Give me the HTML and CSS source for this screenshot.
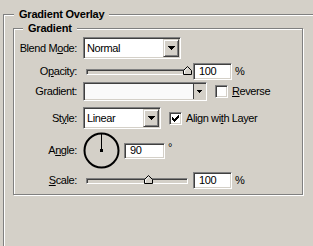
FILE: index.html
```html
<!DOCTYPE html>
<html>
<head>
<meta charset="utf-8">
<link rel="stylesheet" href="styles.css">
</head>
<body>
<div class="group outer">
  <div class="group-title outer-title">Gradient Overlay</div>
  <div class="group inner">
    <div class="group-title inner-title">Gradient</div>

    <div class="row row-blend">
      <span class="lbl">Blend M<u>o</u>de:</span>
      <div class="sunken combo combo-blend">
        <span class="combo-text">Normal</span>
        <span class="raised combo-btn"><svg class="arrow" width="7" height="4" viewBox="0 0 7 4"><path d="M0 0h7v1h-1v1h-1v1h-1v1h-1v-1h-1v-1h-1v-1h-1z"/></svg></span>
      </div>
    </div>

    <div class="row row-opacity">
      <span class="lbl">O<u>p</u>acity:</span>
      <div class="slider">
        <div class="sunken track"></div>
        <svg class="thumb" style="left:97px" width="9" height="9" viewBox="0 0 9 9"><path d="M0.5 8.5V4.5L4.5 0.5L8.5 4.5V8.5Z" fill="#d4d0c8" stroke="#000"/><path d="M1.5 7.5V4.9L4.5 1.9" fill="none" stroke="#fff"/></svg>
      </div>
      <div class="sunken field field-num">100</div>
      <span class="unit">%</span>
    </div>

    <div class="row row-gradient">
      <span class="lbl">Gradient:</span>
      <div class="sunken gradbox">
        <span class="swatch"></span>
        <span class="grad-btn"><svg width="5" height="3" viewBox="0 0 5 3"><path d="M0 0h5v1h-1v1h-1v1h-1v-1h-1v-1h-1z"/></svg></span>
      </div>
      <span class="sunken check"></span>
      <span class="check-label"><u>R</u>everse</span>
    </div>

    <div class="row row-style">
      <span class="lbl">St<u>y</u>le:</span>
      <div class="sunken combo combo-style">
        <span class="combo-text">Linear</span>
        <span class="raised combo-btn"><svg class="arrow" width="7" height="4" viewBox="0 0 7 4"><path d="M0 0h7v1h-1v1h-1v1h-1v1h-1v-1h-1v-1h-1v-1h-1z"/></svg></span>
      </div>
      <span class="sunken check check-on"><svg width="7" height="7" viewBox="0 0 7 7"><path d="M0 2h1v3h-1zM1 3h1v3h-1zM2 4h1v3h-1zM3 3h1v3h-1zM4 2h1v3h-1zM5 1h1v3h-1zM6 0h1v3h-1z"/></svg></span>
      <span class="check-label">Align wi<u>t</u>h Layer</span>
    </div>

    <div class="row row-angle">
      <span class="lbl">A<u>n</u>gle:</span>
      <svg class="dial" width="37" height="37" viewBox="0 0 37 37">
        <circle cx="18.5" cy="18.5" r="17" fill="none" stroke="#000" stroke-width="2"/>
        <path d="M18 1h1v17h-1z"/>
        <rect x="17" y="17" width="3" height="3"/>
      </svg>
      <div class="sunken field field-angle">90</div>
      <span class="degree">°</span>
    </div>

    <div class="row row-scale">
      <span class="lbl"><u>S</u>cale:</span>
      <div class="slider">
        <div class="sunken track"></div>
        <svg class="thumb" style="left:58px" width="9" height="9" viewBox="0 0 9 9"><path d="M0.5 8.5V4.5L4.5 0.5L8.5 4.5V8.5Z" fill="#d4d0c8" stroke="#000"/><path d="M1.5 7.5V4.9L4.5 1.9" fill="none" stroke="#fff"/></svg>
      </div>
      <div class="sunken field field-num">100</div>
      <span class="unit">%</span>
    </div>
  </div>
</div>
</body>
</html>
```

FILE: styles.css
```css
html, body {
  margin: 0;
  padding: 0;
  background: #d4d0c8;
  overflow: hidden;
}
body {
  width: 313px;
  height: 246px;
  padding: 14px 0 0 3px;
  box-sizing: border-box;
  font-family: "Liberation Sans", Arial, sans-serif;
  font-size: 11px;
  line-height: 13px;
  letter-spacing: -0.4px;
  color: #000;
}
.group {
  border: 1px solid #808080;
  box-shadow: inset 1px 1px #fff, 1px 1px #fff;
}
.outer {
  width: 310px;
  height: 232px;
  box-sizing: border-box;
  border-right: none;
  border-bottom: none;
  box-shadow: inset 1px 1px #fff;
}
.group-title {
  width: fit-content;
  background: #d4d0c8;
  padding: 0 5px;
  margin-top: -7px;
  font-weight: bold;
  letter-spacing: -0.2px;
  height: 13px;
}
.outer-title { margin-left: 10px; }
.inner-title { margin-left: 9px; }
.inner {
  width: 290px;
  box-sizing: border-box;
  margin: 7px 0 0 9px;
  padding: 0 0 5px 0;
}
.row {
  display: flex;
  align-items: center;
}
.lbl {
  width: 63px;
  text-align: right;
  margin-right: 6px;
  white-space: nowrap;
}
.row-blend { margin-top: 2px; height: 22px; }
.row-opacity { margin-top: 4px; height: 17px; }
.row-gradient { margin-top: 2px; height: 19px; }
.row-style { margin-top: 6px; height: 22px; }
.row-angle { margin-top: 3px; height: 37px; }
.row-scale { margin-top: 3px; height: 17px; }

.sunken {
  box-sizing: border-box;
  border: 1px solid;
  border-color: #808080 #fff #fff #808080;
  box-shadow: inset 1px 1px #404040, inset -1px -1px #d4d0c8;
  background: #fff;
}
.raised {
  box-sizing: border-box;
  border: 1px solid;
  border-color: #d4d0c8 #404040 #404040 #d4d0c8;
  box-shadow: inset 1px 1px #fff, inset -1px -1px #808080;
  background: #d4d0c8;
}
.combo {
  display: flex;
  align-items: stretch;
  height: 22px;
  padding: 1px;
}
.combo-blend { width: 98px; }
.combo-style { width: 78px; }
.combo-text {
  flex: 1;
  padding-left: 2px;
  display: flex;
  align-items: center;
}
.combo-btn {
  width: 16px;
  display: flex;
  align-items: center;
  justify-content: center;
}
.slider {
  position: relative;
  width: 102px;
  height: 17px;
  margin-left: 3px;
}
.track {
  width: 102px;
  height: 6px;
  margin-top: 6px;
  background: #d4d0c8;
}
.thumb {
  position: absolute;
  top: 3px;
  display: block;
}
.field {
  display: flex;
  align-items: center;
  padding-left: 5px;
}
.field-num {
  width: 39px;
  height: 17px;
  margin-left: 5px;
}
.unit { margin-left: 3px; }
.gradbox {
  width: 124px;
  height: 19px;
  display: flex;
  padding: 1px;
}
.swatch {
  flex: 1;
  background: #fafafa;
}
.grad-btn {
  width: 11px;
  border-left: 1px solid #404040;
  background: #d4d0c8;
  display: flex;
  align-items: center;
  justify-content: center;
}
.check {
  width: 13px;
  height: 13px;
  margin-left: 8px;
  display: flex;
  align-items: center;
  justify-content: center;
}
.check-label { margin-left: 4px; white-space: nowrap; }
.dial { display: block; }
.field-angle {
  width: 41px;
  height: 16px;
  margin-left: 4px;
}
.degree {
  align-self: flex-start;
  margin: 9px 0 0 3px;
}
svg { display: block; }
```
